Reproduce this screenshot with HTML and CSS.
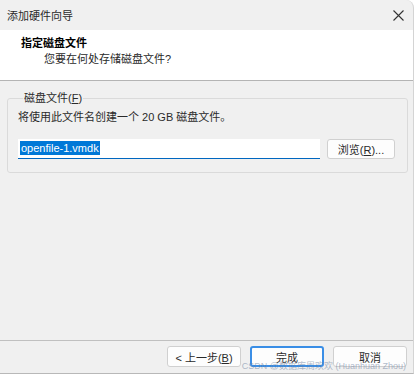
FILE: index.html
```html
<!DOCTYPE html>
<html lang="zh-CN">
<head>
  <meta charset="UTF-8" />
  <meta name="viewport" content="width=device-width, initial-scale=1.0"/>
  <title>添加硬件向导</title>
  <link rel="stylesheet" href="styles.css">
</head>
<body>
  <div class="window">
    <div class="titlebar">
      <span>添加硬件向导</span>
      <svg class="close" width="11" height="11" viewBox="0 0 11 11">
        <path d="M0.5 0.5 L10.5 10.5 M10.5 0.5 L0.5 10.5" stroke="#333" stroke-width="1.1" fill="none"/>
      </svg>
    </div>

    <div class="header">
      <h1>指定磁盘文件</h1>
      <p>您要在何处存储磁盘文件?</p>
    </div>

    <div class="content">
      <fieldset class="group">
        <legend>磁盘文件(<u>F</u>)</legend>
        <p class="info">将使用此文件名创建一个 20 GB 磁盘文件。</p>
        <div class="file-row">
          <div class="field"><span class="sel">openfile-1.vmdk</span></div>
          <button class="btn btn-browse">浏览(<u>R</u>)...</button>
        </div>
      </fieldset>
    </div>

    <div class="footer">
      <button class="btn">&lt; 上一步(<u>B</u>)</button>
      <button class="btn btn-primary">完成</button>
      <button class="btn">取消</button>
      <span class="watermark">CSDN @数据库周欢欢 (Huanhuan Zhou)</span>
    </div>
  </div>
</body>
</html>
```

FILE: styles.css
```css
* {margin: 0; padding: 0; box-sizing: border-box; font-family: "Liberation Sans", "Noto Sans CJK SC", sans-serif;}
body {background-color: #fff; width: 416px; height: 380px; overflow: hidden;}
.window {width: 414px; height: 374px; background-color: #f0f0f0; border-top-right-radius: 8px; border-right: 1px solid #d4d4d4; border-bottom: 1px solid #b8b8b8; display: flex; flex-direction: column; overflow: hidden;}

.titlebar {height: 30px; display: flex; align-items: center; justify-content: space-between; padding: 0 8px 0 7px; font-size: 11px; color: #2a2a2a;}
.titlebar .close {margin-right: 1px;}

.header {background-color: #fff; height: 51px; border-bottom: 1px solid #b4b4b4; padding: 5px 0 0 21px;}
.header h1 {font-size: 11px; font-weight: bold; color: #000; line-height: 16px;}
.header p {font-size: 11px; color: #2a2a2a; line-height: 17px; margin-left: 23px;}

.content {flex: 1; padding: 9px 7px 0 7px;}
.group {border: 1px solid #dadada; border-radius: 3px; padding: 0 12px 12px 10px; height: 83px;}
.group legend {font-size: 11px; color: #2a2a2a; padding: 0 1px; margin-left: 5px; line-height: 16px;}
.info {font-size: 11px; color: #2a2a2a; line-height: 16px; margin-top: 3px;}
.file-row {display: flex; align-items: center; margin-top: 14px; gap: 7px;}
.field {width: 302px; height: 20px; background-color: #fff; border-bottom: 1px solid #0067c0; padding: 2px 0 0 2px; font-size: 11px; line-height: 15px;}
.sel {background-color: #0078d7; color: #fff; padding: 1px 1px;}

.btn {height: 21px; width: 74px; background-color: #fdfdfd; border: 1px solid #d0d0d0; border-radius: 3px; font-size: 11px; color: #2a2a2a;}
.btn-browse {width: 68px; height: 20px;}
.btn-primary {border: 2px solid #3a8ee6;}

.footer {height: 33px; border-top: 1px solid #c0c0c0; display: flex; align-items: flex-start; justify-content: flex-end; gap: 9px; padding: 5px 6px 0 0; position: relative;}
.watermark {position: absolute; right: 7px; top: 20px; font-size: 9px; line-height: 11px; color: rgba(110, 130, 160, 0.55); white-space: nowrap;}
```
